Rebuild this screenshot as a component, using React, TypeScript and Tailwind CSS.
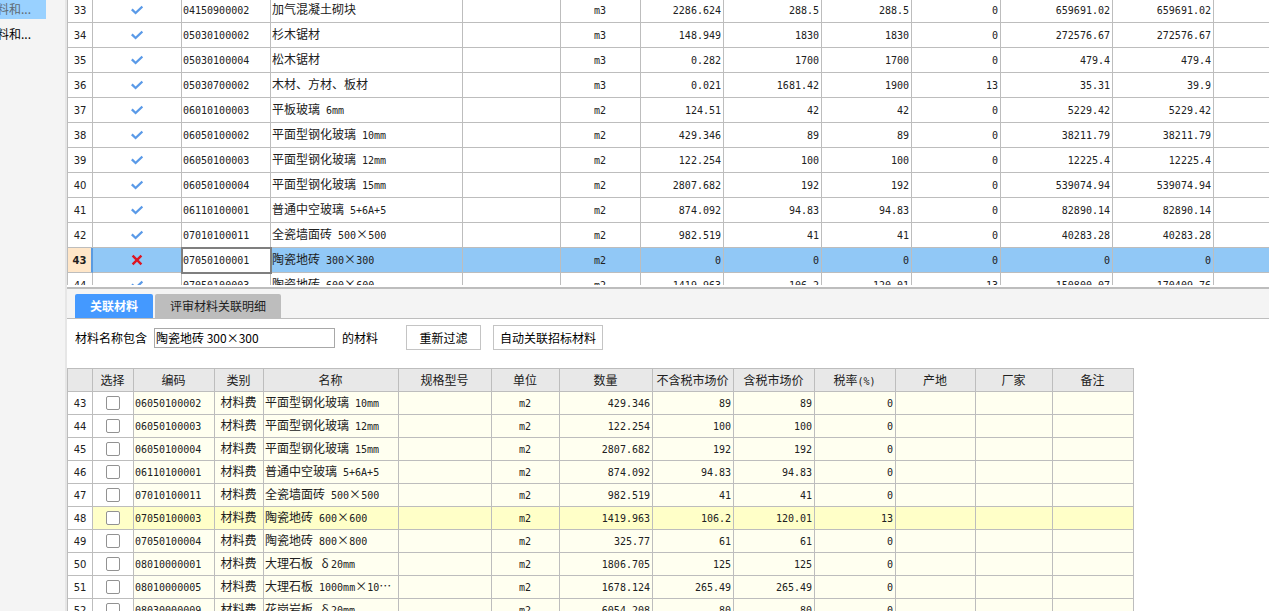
import React from 'react';
import clsx from 'clsx';

interface Material {
  no: number;
  linked: boolean;
  code: string;
  name: string;
  unit: string;
  values: string[];
}

interface Candidate {
  no: number;
  code: string;
  name: string;
  unit: string;
  values: string[];
}

const materials: Material[] = [
  { no: 33, linked: true, code: '04150900002', name: '加气混凝土砌块', unit: 'm3', values: ['2286.624', '288.5', '288.5', '0', '659691.02', '659691.02'] },
  { no: 34, linked: true, code: '05030100002', name: '杉木锯材', unit: 'm3', values: ['148.949', '1830', '1830', '0', '272576.67', '272576.67'] },
  { no: 35, linked: true, code: '05030100004', name: '松木锯材', unit: 'm3', values: ['0.282', '1700', '1700', '0', '479.4', '479.4'] },
  { no: 36, linked: true, code: '05030700002', name: '木材、方材、板材', unit: 'm3', values: ['0.021', '1681.42', '1900', '13', '35.31', '39.9'] },
  { no: 37, linked: true, code: '06010100003', name: '平板玻璃 6mm', unit: 'm2', values: ['124.51', '42', '42', '0', '5229.42', '5229.42'] },
  { no: 38, linked: true, code: '06050100002', name: '平面型钢化玻璃 10mm', unit: 'm2', values: ['429.346', '89', '89', '0', '38211.79', '38211.79'] },
  { no: 39, linked: true, code: '06050100003', name: '平面型钢化玻璃 12mm', unit: 'm2', values: ['122.254', '100', '100', '0', '12225.4', '12225.4'] },
  { no: 40, linked: true, code: '06050100004', name: '平面型钢化玻璃 15mm', unit: 'm2', values: ['2807.682', '192', '192', '0', '539074.94', '539074.94'] },
  { no: 41, linked: true, code: '06110100001', name: '普通中空玻璃 5+6A+5', unit: 'm2', values: ['874.092', '94.83', '94.83', '0', '82890.14', '82890.14'] },
  { no: 42, linked: true, code: '07010100011', name: '全瓷墙面砖 500×500', unit: 'm2', values: ['982.519', '41', '41', '0', '40283.28', '40283.28'] },
  { no: 43, linked: false, code: '07050100001', name: '陶瓷地砖 300×300', unit: 'm2', values: ['0', '0', '0', '0', '0', '0'] },
  { no: 44, linked: true, code: '07050100003', name: '陶瓷地砖 600×600', unit: 'm2', values: ['1419.963', '106.2', '120.01', '13', '150800.07', '170409.76'] },
];

const candidates: Candidate[] = [
  { no: 43, code: '06050100002', name: '平面型钢化玻璃 10mm', unit: 'm2', values: ['429.346', '89', '89', '0'] },
  { no: 44, code: '06050100003', name: '平面型钢化玻璃 12mm', unit: 'm2', values: ['122.254', '100', '100', '0'] },
  { no: 45, code: '06050100004', name: '平面型钢化玻璃 15mm', unit: 'm2', values: ['2807.682', '192', '192', '0'] },
  { no: 46, code: '06110100001', name: '普通中空玻璃 5+6A+5', unit: 'm2', values: ['874.092', '94.83', '94.83', '0'] },
  { no: 47, code: '07010100011', name: '全瓷墙面砖 500×500', unit: 'm2', values: ['982.519', '41', '41', '0'] },
  { no: 48, code: '07050100003', name: '陶瓷地砖 600×600', unit: 'm2', values: ['1419.963', '106.2', '120.01', '13'] },
  { no: 49, code: '07050100004', name: '陶瓷地砖 800×800', unit: 'm2', values: ['325.77', '61', '61', '0'] },
  { no: 50, code: '08010000001', name: '大理石板 δ20mm', unit: 'm2', values: ['1806.705', '125', '125', '0'] },
  { no: 51, code: '08010000005', name: '大理石板 1000mm×10⋯', unit: 'm2', values: ['1678.124', '265.49', '265.49', '0'] },
  { no: 52, code: '08030000009', name: '花岗岩板 δ20mm', unit: 'm2', values: ['6054.208', '80', '80', '0'] },
];

const headers = ['', '选择', '编码', '类别', '名称', '规格型号', '单位', '数量', '不含税市场价', '含税市场价', '税率(%)', '产地', '厂家', '备注'];

const materialCols = ['w-[26px]', 'w-[89px]', 'w-[89px]', 'w-[192px]', 'w-[98px]', 'w-[80px]', 'w-[83px]', 'w-[98px]', 'w-[90px]', 'w-[89px]', 'w-[112px]', 'w-[101px]', ''];

const candidateCols = ['w-[26px]', 'w-[41px]', 'w-[81px]', 'w-[49px]', 'w-[135px]', 'w-[93px]', 'w-[68px]', 'w-[93px]', 'w-[81px]', 'w-[81px]', 'w-[81px]', 'w-[80px]', 'w-[77px]', 'w-[81px]'];

const frame = 'border-r border-b border-[#bdbdbd]';
const cell = `${frame} pr-0.5 pb-0.5 pl-px`;
const numberCell = `${frame} border-l pt-0.5 text-center font-['DejaVu_Sans',sans-serif] text-[10px]`;

// Latin runs are set narrower than the Chinese text, two of them to one full-width character
const Mixed = ({ text }: { text: string }) => (
  <>
    {text.split(/([\x20-\x7e]+|[δ⋯])/).map((part, index) => {
      if (index % 2 === 0) return part;
      return part === 'δ' || part === '⋯' ? (
        <span key={index} className="inline-block w-3 text-center leading-none">
          {part}
        </span>
      ) : (
        <span key={index} className="font-['DejaVu_Sans_Mono',monospace] text-[10px] leading-none whitespace-pre">
          {part}
        </span>
      );
    })}
  </>
);

const LinkedIcon = () => (
  <svg className="mx-auto mt-0.5 h-3 w-3" viewBox="0 0 12 12" fill="none" stroke="#5a9ae8" strokeWidth="2.3">
    <path d="M0.8 5.4 L4.6 9 L11.4 2.6" />
  </svg>
);

const UnlinkedIcon = () => (
  <svg className="mx-auto mt-0.5 h-3 w-3" viewBox="0 0 12 12" fill="none" stroke="#dd1522" strokeWidth="2.4">
    <path d="M1.6 1.6 L10.4 10.4 M10.4 1.6 L1.6 10.4" />
  </svg>
);

const MaterialRow = ({ no, linked, code, name, unit, values }: Material) => (
  <tr className={clsx('h-[25px]', !linked && 'bg-[#91c8f6]')}>
    <td className={clsx(numberCell, !linked && 'border-r-2 border-r-[#5b9be0] bg-[#ffe6c8] font-bold')}>{no}</td>
    <td className={cell}>{linked ? <LinkedIcon /> : <UnlinkedIcon />}</td>
    <td className={clsx(cell, !linked && 'relative bg-white outline-2 -outline-offset-1 outline-[#7f7f7f]')}>
      <Mixed text={code} />
    </td>
    <td className={cell}>
      <Mixed text={name} />
    </td>
    <td className={cell} />
    <td className={clsx(cell, 'text-center')}>
      <Mixed text={unit} />
    </td>
    {values.map((value, index) => (
      <td key={index} className={clsx(cell, 'text-right')}>
        <Mixed text={value} />
      </td>
    ))}
    <td className="border-b border-[#bdbdbd]" />
  </tr>
);

const CandidateRow = ({ no, code, name, unit, values, active }: Candidate & { active: boolean }) => (
  <tr className={clsx('h-[23px]', active ? 'bg-[#ffffc8]' : 'bg-[#fffff0]')}>
    <td className={clsx(numberCell, 'bg-white')}>{no}</td>
    <td className={clsx(frame, !active && 'bg-white')}>
      <input
        type="checkbox"
        aria-label={code}
        className="mx-auto block h-3.5 w-3.5 appearance-none rounded-xs border border-[#929292] bg-white checked:bg-[#4499ff]"
      />
    </td>
    <td className={cell}>
      <Mixed text={code} />
    </td>
    <td className={clsx(cell, 'text-center')}>材料费</td>
    <td className={clsx(cell, 'whitespace-nowrap')}>
      <Mixed text={name} />
    </td>
    <td className={cell} />
    <td className={clsx(cell, 'text-center')}>
      <Mixed text={unit} />
    </td>
    {values.map((value, index) => (
      <td key={index} className={clsx(cell, 'text-right')}>
        <Mixed text={value} />
      </td>
    ))}
    <td className={cell} />
    <td className={cell} />
    <td className={cell} />
  </tr>
);

const App = () => {
  return (
    <div className="flex h-screen overflow-hidden bg-white font-['Noto_Sans_CJK_SC',sans-serif] text-xs leading-4 text-[#202020]">
      <nav className="w-[67px] shrink-0 overflow-hidden border-r-2 border-[#e6e6e6] bg-[#f4f4f4]">
        <a href="#summary" className="block h-[19px] w-[46px] bg-[#99d1ff] pt-px text-[#606a72]">
          <span className="-ml-[3px]">料和...</span>
        </a>
        <a href="#detail" className="mt-1.5 block h-[19px] w-[46px] pt-px text-black">
          <span className="-ml-[3px]">料和...</span>
        </a>
      </nav>

      <main className="flex min-w-0 flex-1 flex-col">
        <section className="h-[289px] shrink-0 border-b-2 border-[#bdbdbd] pb-0.5">
          <div className="h-full overflow-hidden">
            <table className="-mt-0.5 w-full table-fixed border-separate border-spacing-0">
              <colgroup>
                {materialCols.map((width, index) => (
                  <col key={index} className={width} />
                ))}
              </colgroup>
              <tbody>
                {materials.map((material) => (
                  <MaterialRow key={material.no} {...material} />
                ))}
              </tbody>
            </table>
          </div>
        </section>

        <div className="flex h-[30px] shrink-0 items-end gap-0.5 border-b border-[#bdbdbd] bg-[#f4f4f4] pl-2">
          <button className="h-6 w-[78px] rounded-t-xs bg-[#4499ff] font-bold text-white">关联材料</button>
          <button className="h-6 w-[126px] rounded-t-xs bg-[#bdbdbd]">评审材料关联明细</button>
        </div>

        <form className="flex shrink-0 items-center px-2 pt-1.5 text-black" onSubmit={(e) => e.preventDefault()}>
          <label htmlFor="keyword">材料名称包含</label>
          <input
            id="keyword"
            type="text"
            defaultValue="陶瓷地砖 300×300"
            className="ml-[7px] h-5 w-[181px] border border-[#a8a8a8] bg-white px-px font-['Noto_Sans_CJK_SC',sans-serif] outline-none"
          />
          <span className="ml-[7px]">的材料</span>
          <button type="button" className="ml-7 h-[25px] w-[75px] border border-[#c4c4c4] bg-white">
            重新过滤
          </button>
          <button type="button" className="ml-3 h-[25px] w-[110px] border border-[#c4c4c4] bg-white">
            自动关联招标材料
          </button>
        </form>

        <section className="mt-[18px] min-h-0 flex-1 overflow-hidden">
          <table className="w-[1067px] table-fixed border-separate border-spacing-0">
            <colgroup>
              {candidateCols.map((width, index) => (
                <col key={index} className={width} />
              ))}
            </colgroup>
            <thead>
              <tr className="h-6 bg-[#e8e8e8]">
                {headers.map((header, index) => (
                  <th
                    key={index}
                    className="border-t border-r border-b border-[#bdbdbd] pr-px font-normal whitespace-nowrap first:border-l"
                  >
                    <Mixed text={header} />
                  </th>
                ))}
              </tr>
            </thead>
            <tbody>
              {candidates.map((candidate) => (
                <CandidateRow key={candidate.no} {...candidate} active={candidate.no === 48} />
              ))}
            </tbody>
          </table>
        </section>
      </main>
    </div>
  );
};

export default App;
